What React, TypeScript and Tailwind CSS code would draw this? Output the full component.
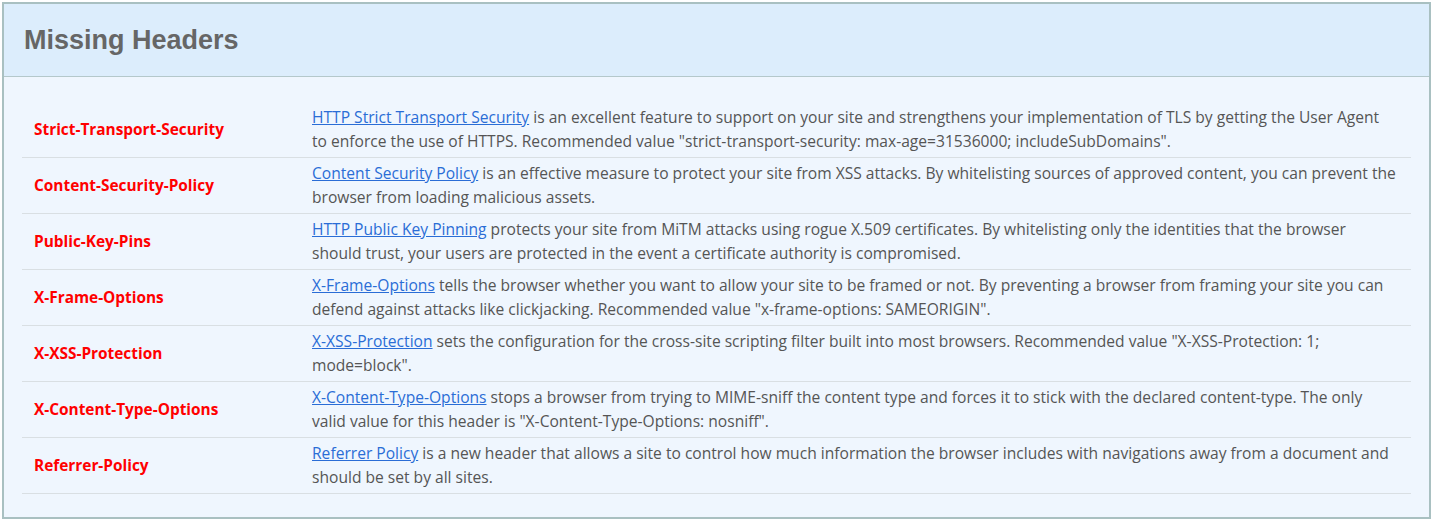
const rows: { name: string; link: string; text: string }[] = [
  {
    name: "Strict-Transport-Security",
    link: "HTTP Strict Transport Security",
    text: ' is an excellent feature to support on your site and strengthens your implementation of TLS by getting the User Agent to enforce the use of HTTPS. Recommended value "strict-transport-security: max-age=31536000; includeSubDomains".',
  },
  {
    name: "Content-Security-Policy",
    link: "Content Security Policy",
    text: " is an effective measure to protect your site from XSS attacks. By whitelisting sources of approved content, you can prevent the browser from loading malicious assets.",
  },
  {
    name: "Public-Key-Pins",
    link: "HTTP Public Key Pinning",
    text: " protects your site from MiTM attacks using rogue X.509 certificates. By whitelisting only the identities that the browser should trust, your users are protected in the event a certificate authority is compromised.",
  },
  {
    name: "X-Frame-Options",
    link: "X-Frame-Options",
    text: ' tells the browser whether you want to allow your site to be framed or not. By preventing a browser from framing your site you can defend against attacks like clickjacking. Recommended value "x-frame-options: SAMEORIGIN".',
  },
  {
    name: "X-XSS-Protection",
    link: "X-XSS-Protection",
    text: ' sets the configuration for the cross-site scripting filter built into most browsers. Recommended value "X-XSS-Protection: 1; mode=block".',
  },
  {
    name: "X-Content-Type-Options",
    link: "X-Content-Type-Options",
    text: ' stops a browser from trying to MIME-sniff the content type and forces it to stick with the declared content-type. The only valid value for this header is "X-Content-Type-Options: nosniff".',
  },
  {
    name: "Referrer-Policy",
    link: "Referrer Policy",
    text: " is a new header that allows a site to control how much information the browser includes with navigations away from a document and should be set by all sites.",
  },
];

export default function App() {
  return (
    <div className="w-[1433px] h-[521px] bg-white p-[2px]">
      <div className="h-full border-2 border-[#a9c0c1] bg-[#eff6fe] flex flex-col">
        <div className="h-[73px] bg-[#dcedfc] border-b border-[#b4c8cb] flex items-center px-[20px]">
          <h2 className="font-['Liberation_Sans',Arial,sans-serif] font-bold text-[27px] text-[#666666]">
            Missing Headers
          </h2>
        </div>
        <div className="pt-[25px] pl-[18px] pr-[18px] font-['Open_Sans',sans-serif] leading-[24px]">
          {rows.map((r) => (
            <div
              key={r.name}
              className="flex items-center h-[56px] border-b border-[#d9dfe3]"
            >
              <div className="w-[290px] shrink-0 pl-[12px] font-bold text-[15.4px] text-[#ff0000]">
                {r.name}
              </div>
              <div className="flex-1 pr-[14px] text-[15.6px] text-[#555555] pb-[1px]">
                <a href="#" className="text-[#2a6dd6] underline">
                  {r.link}
                </a>
                {r.text}
              </div>
            </div>
          ))}
        </div>
      </div>
    </div>
  );
}
